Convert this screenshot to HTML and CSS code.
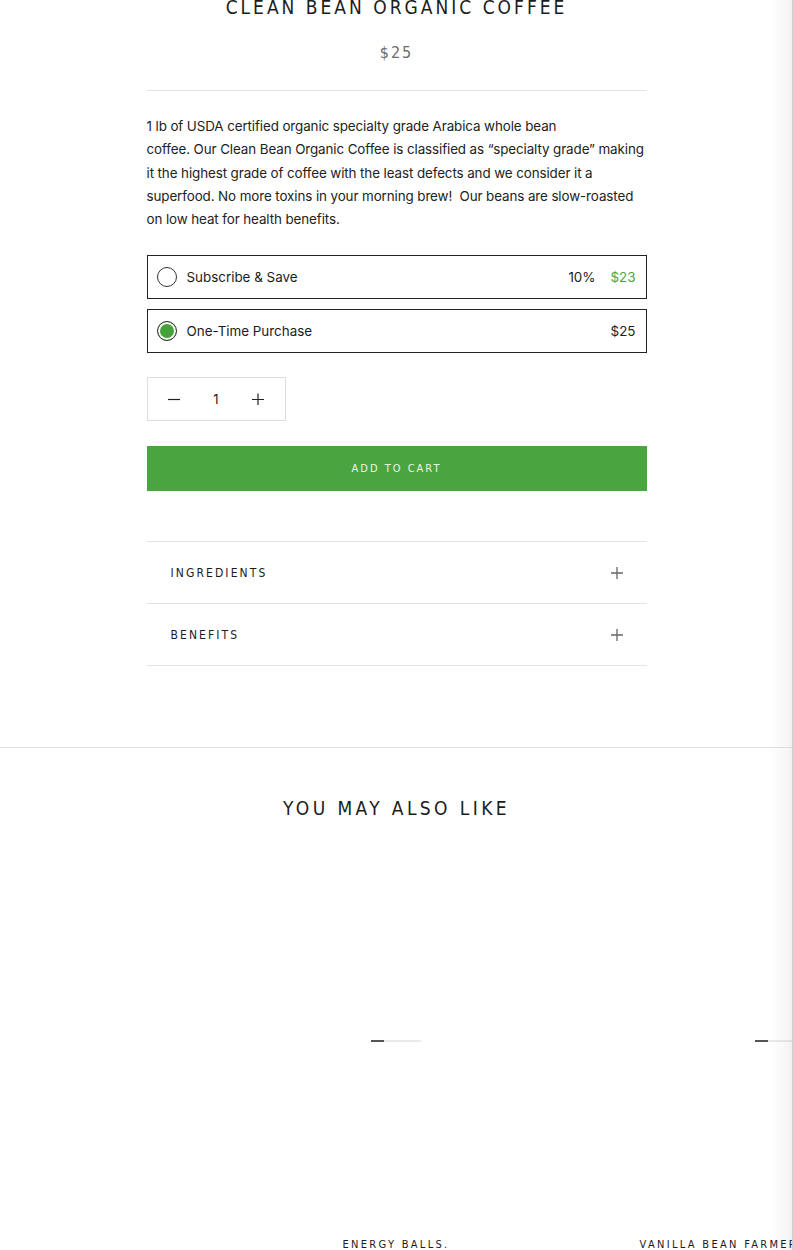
FILE: index.html
```html
<!DOCTYPE html>
<html>
<head>
<meta charset="utf-8">
<link rel="stylesheet" href="styles.css">
</head>
<body>
<div class="page">
  <section class="product">
    <h1 class="title">CLEAN BEAN ORGANIC COFFEE</h1>
    <div class="price">$25</div>
    <hr class="rule">
    <p class="desc">1 lb of USDA certified organic specialty grade Arabica whole bean<br>coffee. Our Clean Bean Organic Coffee is classified as “specialty grade” making it the highest grade of coffee with the least defects and we consider it a superfood. No more toxins in your morning brew!&nbsp; Our beans are slow-roasted on low heat for health benefits.</p>

    <div class="options">
      <label class="option">
        <span class="radio"></span>
        <span class="opt-label">Subscribe &amp; Save</span>
        <span class="opt-pct">10%</span>
        <span class="opt-price green">$23</span>
      </label>
      <label class="option">
        <span class="radio checked"></span>
        <span class="opt-label">One-Time Purchase</span>
        <span class="opt-price">$25</span>
      </label>
    </div>

    <div class="qty">
      <span class="qty-btn"><svg width="12" height="12" viewBox="0 0 12 12"><path d="M0 6.5h12" stroke="#222" stroke-width="1.2"/></svg></span>
      <span class="qty-val">1</span>
      <span class="qty-btn"><svg width="12" height="12" viewBox="0 0 12 12"><path d="M0 6.5h12M6 0.5v12" stroke="#222" stroke-width="1.2"/></svg></span>
    </div>

    <button class="cart">ADD TO CART</button>

    <div class="accordion">
      <div class="acc-item"><span class="acc-title">INGREDIENTS</span><svg class="plus" width="12" height="12" viewBox="0 0 12 12"><path d="M0 6h12M6 0v12" stroke="#666" stroke-width="1.3"/></svg></div>
      <div class="acc-item"><span class="acc-title">BENEFITS</span><svg class="plus" width="12" height="12" viewBox="0 0 12 12"><path d="M0 6h12M6 0v12" stroke="#666" stroke-width="1.3"/></svg></div>
    </div>
  </section>

  <section class="related">
    <h2 class="related-title">YOU MAY ALSO LIKE</h2>
    <div class="cards">
      <div class="card">
        <div class="card-img"><div class="loader"><span></span></div></div>
        <div class="card-name">ENERGY BALLS.</div>
      </div>
      <div class="card">
        <div class="card-img"><div class="loader"><span></span></div></div>
        <div class="card-name">VANILLA BEAN FARMER’S BLEND COFFEE</div>
      </div>
    </div>
  </section>
</div>
<div class="edge"></div>
</body>
</html>
```

FILE: styles.css
```css
html, body {
  margin: 0;
  padding: 0;
  background: #fff;
  overflow: hidden;
}
body {
  font-family: Inter, "Open Sans", sans-serif;
  color: #1c1c1c;
}
.page {
  width: 793px;
  overflow: hidden;
}
.product {
  width: 500px;
  margin: 0 auto;
  margin-top: -7px;
}
.title {
  font-family: "DejaVu Sans Condensed", "DejaVu Sans", sans-serif;
  font-stretch: condensed;
  font-weight: 400;
  font-size: 19px;
  letter-spacing: 3px;
  line-height: 28px;
  margin: 0;
  text-align: center;
  color: #1c1c1c;
}
.price {
  font-family: "DejaVu Sans Condensed", "DejaVu Sans", sans-serif;
  font-stretch: condensed;
  font-size: 16px;
  letter-spacing: 2px;
  color: #6b6b6b;
  text-align: center;
  margin-top: 22px;
  line-height: 20px;
}
.rule {
  border: 0;
  border-top: 1px solid #e3e3e3;
  margin: 27px 0 0;
}
.desc {
  font-size: 13.4px;
  line-height: 23.3px;
  margin: 24px 0 0;
  color: #222;
  letter-spacing: -0.1px;
}
.options {
  margin-top: 24px;
  display: flex;
  flex-direction: column;
  gap: 10px;
}
.option {
  display: flex;
  align-items: center;
  height: 42px;
  border: 1px solid #222;
  padding: 0 10px 0 9px;
  font-size: 13.4px;
}
.radio {
  width: 20px;
  height: 20px;
  border: 1px solid #333;
  border-radius: 50%;
  box-sizing: border-box;
  margin-right: 10px;
  flex: none;
}
.radio.checked {
  background: #45a23b;
  box-shadow: inset 0 0 0 2px #fff;
}
.opt-label {
  flex: 1;
}
.opt-pct {
  margin-right: 15px;
}
.green {
  color: #4aa541;
}
.qty {
  margin-top: 24px;
  height: 42px;
  border: 1px solid #dcdcdc;
  display: flex;
  align-items: center;
  justify-content: space-between;
  padding: 0 20px;
  width: 97px;
}
.qty-btn {
  display: flex;
  width: 12px;
  height: 12px;
}
.qty-val {
  font-size: 13px;
}
.cart {
  display: block;
  width: 100%;
  margin-top: 25px;
  height: 45px;
  border: 0;
  background: #4aa541;
  color: #e9f5e6;
  font-family: "DejaVu Sans Condensed", "DejaVu Sans", sans-serif;
  font-stretch: condensed;
  font-size: 11px;
  letter-spacing: 2px;
  padding: 0;
}
.accordion {
  margin-top: 50px;
  border-top: 1px solid #e3e3e3;
}
.acc-item {
  height: 61px;
  border-bottom: 1px solid #e3e3e3;
  display: flex;
  align-items: center;
  justify-content: space-between;
  padding: 0 24px;
}
.acc-title {
  font-family: "DejaVu Sans Condensed", "DejaVu Sans", sans-serif;
  font-stretch: condensed;
  font-size: 12px;
  letter-spacing: 2.1px;
  color: #1c1c1c;
}
.related {
  margin-top: 81px;
  border-top: 1px solid #e3e3e3;
  padding-top: 47px;
}
.related-title {
  margin: 0;
  font-family: "DejaVu Sans Condensed", "DejaVu Sans", sans-serif;
  font-stretch: condensed;
  font-weight: 400;
  font-size: 19px;
  letter-spacing: 3.4px;
  line-height: 26px;
  text-align: center;
}
.cards {
  display: flex;
  gap: 24px;
  margin-top: 22px;
  padding-left: 216px;
}
.card {
  width: 360px;
  flex: none;
}
.card-img {
  height: 395px;
  display: flex;
  align-items: center;
  justify-content: center;
}
.loader {
  width: 50px;
  height: 2px;
  background: #ebebeb;
}
.loader span {
  display: block;
  width: 13px;
  height: 2px;
  background: #555;
}
.card-name {
  display: flex;
  justify-content: center;
  font-family: "DejaVu Sans Condensed", "DejaVu Sans", sans-serif;
  font-stretch: condensed;
  font-size: 11px;
  letter-spacing: 2.3px;
  white-space: nowrap;
}
.edge {
  position: fixed;
  top: 0;
  right: 0;
  width: 24px;
  height: 100%;
  background: linear-gradient(to right, rgba(0,0,0,0), rgba(0,0,0,0.04) 85%, rgba(0,0,0,0.06));
  border-right: 1px solid #cfcfcf;
  box-sizing: border-box;
  pointer-events: none;
}
```
